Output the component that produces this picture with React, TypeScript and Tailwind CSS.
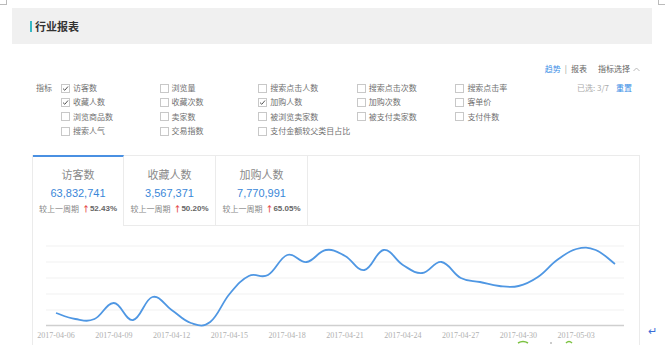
import React from "react";

const CJK = { fontFamily: '"Noto Sans CJK SC", "Noto Sans", sans-serif' };

const ys = [313,319,319,303,320,297,310,323,322,294,276,275,255,262,250,256,270,250,265,273,262,278,282,286,286,277,260,249,250,264];

function buildPath() {
  const pts = ys.map((y, i) => [55 + i * 19.275 - 32, y - 226]);
  let d = `M${pts[0][0].toFixed(1)},${pts[0][1].toFixed(1)}`;
  for (let i = 0; i < pts.length - 1; i++) {
    const p0 = pts[i - 1] || pts[i];
    const p1 = pts[i];
    const p2 = pts[i + 1];
    const p3 = pts[i + 2] || p2;
    const t = 0.2;
    const c1x = p1[0] + (p2[0] - p0[0]) * t;
    const c1y = p1[1] + (p2[1] - p0[1]) * t;
    const c2x = p2[0] - (p3[0] - p1[0]) * t;
    const c2y = p2[1] - (p3[1] - p1[1]) * t;
    d += ` C${c1x.toFixed(1)},${c1y.toFixed(1)} ${c2x.toFixed(1)},${c2y.toFixed(1)} ${p2[0].toFixed(1)},${p2[1].toFixed(1)}`;
  }
  return d;
}

const labels = ["2017-04-06","2017-04-09","2017-04-12","2017-04-15","2017-04-18","2017-04-21","2017-04-24","2017-04-27","2017-04-30","2017-05-03"];

type Item = { t: string; c?: boolean } | null;
const grid: Item[][] = [
  [{ t: "访客数", c: true }, { t: "浏览量" }, { t: "搜索点击人数" }, { t: "搜索点击次数" }, { t: "搜索点击率" }],
  [{ t: "收藏人数", c: true }, { t: "收藏次数" }, { t: "加购人数", c: true }, { t: "加购次数" }, { t: "客单价" }],
  [{ t: "浏览商品数" }, { t: "卖家数" }, { t: "被浏览卖家数" }, { t: "被支付卖家数" }, { t: "支付件数" }],
  [{ t: "搜索人气" }, { t: "交易指数" }, { t: "支付金额较父类目占比" }, null, null],
];

function Check({ on }: { on?: boolean }) {
  return (
    <span className="w-[9px] h-[9px] border border-[#c8c8c8] bg-white flex items-center justify-center shrink-0">
      {on && (
        <svg width="7" height="7" viewBox="0 0 7 7">
          <path d="M1 3.6 L2.8 5.3 L6 1.5" stroke="#555" strokeWidth="1" fill="none" />
        </svg>
      )}
    </span>
  );
}

const tabs = [
  { l: "访客数", n: "63,832,741", p: "52.43%" },
  { l: "收藏人数", n: "3,567,371", p: "50.20%" },
  { l: "加购人数", n: "7,770,991", p: "65.05%" },
];

export default function App() {
  const path = buildPath();
  return (
    <div className="w-[665px] h-[363px] relative bg-white overflow-hidden" style={CJK}>
      {/* crop marks */}
      <div className="absolute left-0 top-[4px] w-[6px] h-px bg-[#bbb]" />
      <div className="absolute left-[6px] top-0 w-px h-[5px] bg-[#bbb]" />
      <div className="absolute right-0 top-[4px] w-[6px] h-px bg-[#bbb]" />
      <div className="absolute right-[6px] top-0 w-px h-[5px] bg-[#bbb]" />

      {/* header */}
      <div className="mt-[8px] ml-[12px] w-[640px] h-[36px] bg-[#f0f0f0] flex items-center pl-[18px]">
        <span className="w-[2px] h-[11px] bg-[#35b8c4] mr-[3px]" />
        <span className="text-[11px] font-bold text-[#333] leading-none">行业报表</span>
      </div>

      {/* toolbar */}
      <div className="mt-[19px] h-[12px] flex justify-end items-center pr-[25px] text-[8px] leading-none text-[#666]">
        <span className="text-[#3a8ee6]">趋势</span>
        <span className="mx-[4px] text-[#999]">|</span>
        <span>报表</span>
        <span className="ml-[11px]">指标选择</span>
        <svg className="ml-[3px]" width="7" height="5" viewBox="0 0 7 5">
          <path d="M0.5 4 L3.5 1 L6.5 4" stroke="#aaa" strokeWidth="0.8" fill="none" />
        </svg>
      </div>

      {/* filters */}
      <div className="mt-[6px] flex text-[8px] leading-none text-[#707070]">
        <div className="pl-[36px] w-[61px] h-[14.33px] flex items-center">指标</div>
        <div className="grid grid-cols-[repeat(5,98.6px)]">
          {grid.flat().map((it, i) =>
            it ? (
              <div key={i} className="h-[14.33px] flex items-center gap-[3px] whitespace-nowrap">
                <Check on={it.c} />
                <span>{it.t}</span>
              </div>
            ) : (
              <div key={i} className="h-[14.33px]" />
            )
          )}
        </div>
        <div className="ml-[23px] h-[14.33px] flex items-center whitespace-nowrap text-[#aaa]">
          <span>已选: 3/7</span>
          <span className="ml-[7px] text-[#3a8ee6]">重置</span>
        </div>
      </div>

      {/* panel */}
      <div className="mt-[17px] ml-[32px] w-[608px] h-[190px] border-l border-r border-[#ebebeb] flex flex-col">
        <div className="flex h-[71px]">
          {tabs.map((t, i) => (
            <div
              key={i}
              className={
                i === 0
                  ? "w-[91px] border-t-2 border-t-[#4a90e2] border-r border-r-[#ebebeb] flex flex-col items-center bg-white"
                  : "w-[92px] border-t border-t-[#ebebeb] border-r border-r-[#ebebeb] border-b border-b-[#ebebeb] flex flex-col items-center"
              }
            >
              <div className={(i === 0 ? "mt-[10px]" : "mt-[11px]") + " h-[14px] flex items-center text-[11px] text-[#8a8a8a]"}>{t.l}</div>
              <div className="mt-[4px] h-[16px] flex items-center text-[11px] text-[#3a87d8]" style={{ fontFamily: '"Liberation Sans", Arial, sans-serif' }}>{t.n}</div>
              <div className="mt-[2.5px] h-[11px] flex items-center text-[8px] text-[#888] whitespace-nowrap">
                <span>较上一周期</span>
                <span className="ml-[3px] text-[#e54d4d] font-bold">↑</span>
                <span className="text-[#666] font-bold" style={{ fontFamily: '"Liberation Sans", Arial, sans-serif' }}>{t.p}</span>
              </div>
            </div>
          ))}
          <div className="flex-1 border-t border-b border-[#ebebeb]" />
        </div>
        <svg width="606" height="119" viewBox="0 0 606 119" className="block">
          {[20, 36, 52, 68, 84].map((y) => (
            <line key={y} x1="13" x2="591" y1={y} y2={y} stroke="#f1f1f1" strokeWidth="1" />
          ))}
          <line x1="13" x2="591" y1="99.5" y2="99.5" stroke="#cfcfcf" strokeWidth="1.5" />
          <path d={path} fill="none" stroke="#4f97e3" strokeWidth="1.8" strokeLinejoin="round" />
          {labels.map((l, i) => (
            <text
              key={l}
              x={23 + i * 57.8}
              y="112"
              textAnchor="middle"
              fontSize="8"
              fill="#b0b0b0"
              fontFamily='"Liberation Serif", serif'
            >
              {l}
            </text>
          ))}
          <path d="M485 117 Q490 114 495 117" stroke="#7cc242" strokeWidth="1.5" fill="none" />
          <line x1="517" x2="519" y1="117" y2="117" stroke="#999" strokeWidth="1" />
          <path d="M533 117 Q536 114 539 117" stroke="#7cc242" strokeWidth="1.5" fill="none" />
        </svg>
      </div>

      {/* paragraph mark */}
      <div className="absolute left-[648px] top-[325px] text-[11px] text-[#3a6fd8] leading-none">↵</div>
    </div>
  );
}
